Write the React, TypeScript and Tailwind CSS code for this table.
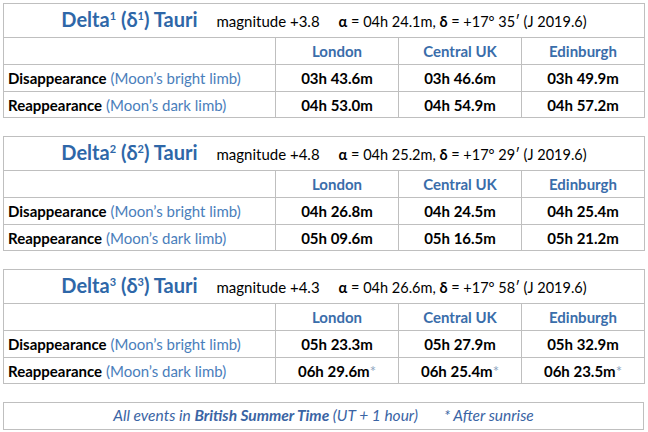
const rows = [
  {
    n: "1",
    mag: "+3.8",
    ra: "04h 24.1m",
    dec: "+17° 35′",
    dis: ["03h 43.6m", "03h 46.6m", "03h 49.9m"],
    rea: ["04h 53.0m", "04h 54.9m", "04h 57.2m"],
    star: false,
  },
  {
    n: "2",
    mag: "+4.8",
    ra: "04h 25.2m",
    dec: "+17° 29′",
    dis: ["04h 26.8m", "04h 24.5m", "04h 25.4m"],
    rea: ["05h 09.6m", "05h 16.5m", "05h 21.2m"],
    star: false,
  },
  {
    n: "3",
    mag: "+4.3",
    ra: "04h 26.6m",
    dec: "+17° 58′",
    dis: ["05h 23.3m", "05h 27.9m", "05h 32.9m"],
    rea: ["06h 29.6m", "06h 25.4m", "06h 23.5m"],
    star: true,
  },
];

function StarTable({ s }: { s: (typeof rows)[number] }) {
  return (
    <table className="w-[641px] table-fixed border-collapse border border-[#bfbfbf] leading-[18px]">
      <colgroup>
        <col className="w-[272px]" />
        <col className="w-[123px]" />
        <col className="w-[123px]" />
        <col className="w-[123px]" />
      </colgroup>
      <tbody>
        <tr className="h-[34px]">
          <td colSpan={4} className="border border-[#bfbfbf] p-0 text-center leading-[22px]">
            <span className="text-[20px] font-bold text-[#2e67a8]">
              Delta<sup className="relative -top-[0.6em] align-baseline text-[11px] leading-none">{s.n}</sup> (δ
              <sup className="relative -top-[0.6em] align-baseline text-[11px] leading-none">{s.n}</sup>) Tauri
            </span>
            <span className="ml-[19px] text-[15px] text-black">magnitude {s.mag}</span>
            <span className="ml-[19px] text-[14.5px] text-black">
              <b>α</b> = {s.ra}, <b>δ</b> = {s.dec} (J 2019.6)
            </span>
          </td>
        </tr>
        <tr className="h-[27px] text-[15px] font-bold text-[#3a6daa]">
          <td className="border border-[#bfbfbf] p-0" />
          <td className="border border-[#bfbfbf] p-0 text-center">London</td>
          <td className="border border-[#bfbfbf] p-0 text-center">Central UK</td>
          <td className="border border-[#bfbfbf] p-0 text-center">Edinburgh</td>
        </tr>
        <tr className="h-[27px] text-[15px]">
          <td className="border border-[#bfbfbf] p-0 pl-[4px]">
            <b>Disappearance</b> <span className="text-[#4a7ebb]">(Moon’s bright limb)</span>
          </td>
          {s.dis.map((t) => (
            <td key={t} className="border border-[#bfbfbf] p-0 text-center font-bold">
              {t}
            </td>
          ))}
        </tr>
        <tr className="h-[26px] text-[15px]">
          <td className="border border-[#bfbfbf] p-0 pl-[4px]">
            <b>Reappearance</b> <span className="text-[#4a7ebb]">(Moon’s dark limb)</span>
          </td>
          {s.rea.map((t) => (
            <td key={t} className="border border-[#bfbfbf] p-0 text-center font-bold">
              {t}
              {s.star && <span className="font-normal text-[#8ea4c0]">*</span>}
            </td>
          ))}
        </tr>
      </tbody>
    </table>
  );
}

export default function App() {
  return (
    <div className="h-[432px] w-[648px] bg-white px-[3px] pt-[3px] font-['Lato',sans-serif] text-black">
      <div className="flex flex-col gap-[18px]">
        {rows.map((s) => (
          <StarTable key={s.n} s={s} />
        ))}
        <div className="flex h-[28px] w-[641px] items-center justify-center border border-[#bfbfbf] text-[15.5px] italic text-[#3a64a4]">
          <span>
            All events in <b>British Summer Time</b> (UT + 1 hour)
          </span>
          <span className="ml-[26px]">* After sunrise</span>
        </div>
      </div>
    </div>
  );
}
